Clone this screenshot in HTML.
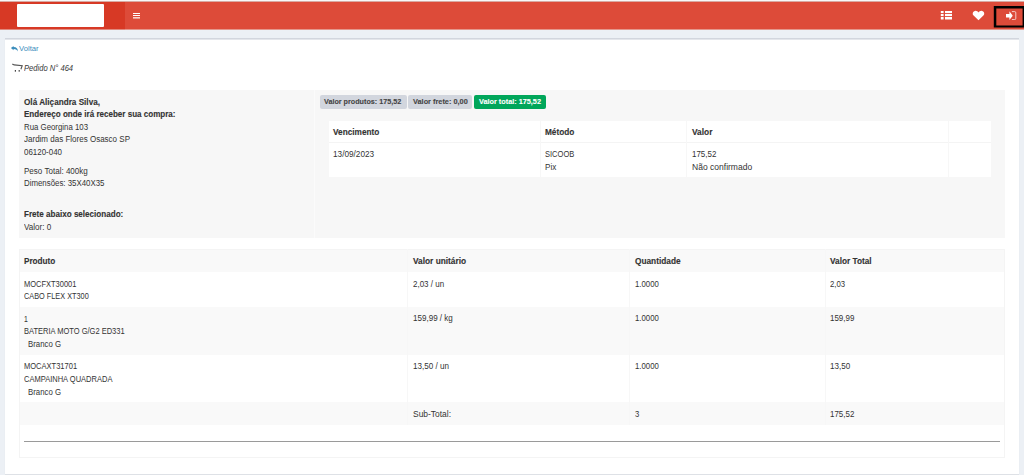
<!DOCTYPE html>
<html><head><meta charset="utf-8">
<style>
*{margin:0;padding:0;box-sizing:border-box}
html,body{width:1024px;height:475px;overflow:hidden;background:#ecf0f5;font-family:"Liberation Sans",sans-serif;color:#333;font-size:8px}
.a{position:absolute;white-space:nowrap}
#topstrip{position:absolute;left:0;top:0;width:1024px;height:2px;background:linear-gradient(#f8f8f8 0,#f8f8f8 1px,#d9aaa3 1px,#d9aaa3 2px)}
#logo{position:absolute;left:0;top:2px;width:125px;height:28px;background:linear-gradient(#d73925 0,#d73925 27px,#e0897e 27px)}
#nav{position:absolute;left:125px;top:2px;width:899px;height:28px;background:linear-gradient(#dd4b39 0,#dd4b39 27px,#e4978c 27px)}
#logobox{position:absolute;left:17px;top:4px;width:87px;height:23px;background:#fff;border-radius:1px}
#box{position:absolute;left:5px;top:38px;width:1014px;height:436px;background:linear-gradient(#d2d6de 0,#d2d6de 1px,#e4e6eb 1px,#e4e6eb 2px,#fff 2px);box-shadow:0 1px 1px rgba(0,0,0,.06)}
.t{position:absolute;white-space:nowrap;line-height:12px;transform-origin:0 50%}
#panel{position:absolute;left:19px;top:90px;width:986px;height:148px;background:#f7f7f7}
.badge{position:absolute;top:95px;height:14px;border-radius:2px;background:#d2d6de}
#ptab{position:absolute;left:329px;top:121px;width:662px;height:56px;background:#fff}
.hl{position:absolute;height:1px;background:#f4f4f4}
.vl{position:absolute;width:1px;background:#f7f7f7}
.row{position:absolute;left:19px;width:986px}
</style></head><body>
<div id="topstrip"></div>
<div id="logo"></div>
<div id="nav"></div>
<div id="logobox"></div>
<svg class="a" style="left:132px;top:12px" width="9" height="8" viewBox="132 12 9 8"><rect x="133" y="13" width="7" height="1" fill="#fff"/><rect x="133" y="15" width="7" height="1" fill="#fff"/><rect x="133" y="17" width="7" height="1.6" fill="#fff" opacity=".75"/></svg>
<svg class="a" style="left:940px;top:10px" width="13" height="11" viewBox="940 10 13 11"><g fill="#fff"><rect x="940.8" y="11" width="2.8" height="2.1"/><rect x="945" y="11" width="7" height="2.1"/><rect x="940.8" y="14" width="2.8" height="2.1"/><rect x="945" y="14" width="7" height="2.1"/><rect x="940.8" y="17" width="2.8" height="2.5"/><rect x="945" y="17" width="7" height="2.5"/></g></svg>
<svg class="a" style="left:972px;top:10px" width="13" height="11" viewBox="0 0 13 11"><path fill="#fff" d="M6.5 10.2 L1.6 5.6 C0.2 4.2 0.5 1.3 3 0.9 C4.6 0.7 5.8 1.6 6.5 2.6 C7.2 1.6 8.4 0.7 10 0.9 C12.5 1.3 12.8 4.2 11.4 5.6 Z"/></svg>
<svg class="a" style="left:990px;top:4px" width="34" height="26" viewBox="990 4 34 26"><path fill="#000" fill-rule="evenodd" d="M993.8 6.1 H1024 V27.6 H993.8 Z M996.3 8.6 H1022.6 V25.4 H996.3 Z"/></svg>
<svg class="a" style="left:1005px;top:11px" width="12" height="9" viewBox="0 0 12 9"><path fill="#fff" d="M1 3.1 Q1 2.9 1.2 2.9 H4.4 V0.6 Q4.4 0.4 4.6 0.5 L7.6 4.5 Q7.7 4.7 7.6 4.9 L4.6 8.8 Q4.4 9 4.4 8.7 V6.4 H1.2 Q1 6.4 1 6.2 Z"/><path fill="none" stroke="#fff" stroke-opacity=".8" stroke-width="0.9" d="M6.9 0.6 H9.6 Q10.8 0.6 10.8 1.8 V7.4 Q10.8 8.6 9.6 8.6 H6.9"/></svg>

<div id="box"></div>
<svg class="a" style="left:10px;top:45px" width="9" height="7" viewBox="0 0 9 7"><path fill="#3c8dbc" d="M0.9 3.1 L3.6 0.9 V1.9 C6.5 1.9 8 3.4 7.8 6.6 C7.2 4.8 6 3.9 3.6 3.9 V5.3 Z"/></svg>
<svg class="a" style="left:8px;top:58px" width="18" height="16" viewBox="8 58 18 16"><path fill="none" stroke="#555" stroke-width="1.1" d="M12.4 63.9 Q13 64.8 14.2 64.9 L22.2 65.8 L20.9 69.3"/><rect x="14.8" y="70.1" width="1.2" height="1.5" fill="#333"/><rect x="18.6" y="70.1" width="1.2" height="1.5" fill="#333"/></svg>

<div id="panel"></div>
<div class="vl" style="left:314px;top:90px;height:148px;background:#fbfbfb"></div>
<div class="badge" style="left:319.5px;width:87px"></div>
<div class="badge" style="left:408px;width:64px"></div>
<div class="badge" style="left:474px;width:72px;background:#00a65a"></div>

<div id="ptab"></div>
<div class="hl" style="left:329px;top:142px;width:662px"></div>
<div class="vl" style="left:540px;top:121px;height:56px"></div>
<div class="vl" style="left:686px;top:121px;height:56px"></div>
<div class="vl" style="left:948px;top:121px;height:56px"></div>

<div class="row" style="top:249px;height:23px;background:#f9f9f9"></div>
<div class="row" style="top:307px;height:48px;background:#f9f9f9"></div>
<div class="row" style="top:402px;height:23px;background:#f9f9f9"></div>
<div class="a" style="left:19px;top:249px;width:986px;height:209px;border:1px solid #f4f4f4"></div>
<div class="vl" style="left:407px;top:249px;height:176px"></div>
<div class="vl" style="left:629px;top:249px;height:176px"></div>
<div class="vl" style="left:825px;top:249px;height:176px"></div>
<div class="a" style="left:24px;top:441px;width:976px;height:1px;background:#9a9a9a"></div>
<div class="t" style="left:24.30px;top:96.18px;font-size:8.5px;font-weight:bold;font-style:normal;color:#333;transform:scaleX(0.9614);-webkit-text-stroke:0.12px #333">Olá Aliçandra Silva,</div>
<div class="t" style="left:24.30px;top:108.38px;font-size:8.5px;font-weight:bold;font-style:normal;color:#333;transform:scaleX(0.9460);-webkit-text-stroke:0.12px #333">Endereço onde irá receber sua compra:</div>
<div class="t" style="left:24.30px;top:120.88px;font-size:8.5px;font-weight:normal;font-style:normal;color:#333;transform:scaleX(0.9214)">Rua Georgina 103</div>
<div class="t" style="left:24.30px;top:133.48px;font-size:8.5px;font-weight:normal;font-style:normal;color:#333;transform:scaleX(0.9428)">Jardim das Flores Osasco SP</div>
<div class="t" style="left:24.30px;top:146.28px;font-size:8.5px;font-weight:normal;font-style:normal;color:#333;transform:scaleX(0.9349)">06120-040</div>
<div class="t" style="left:24.30px;top:164.58px;font-size:8.5px;font-weight:normal;font-style:normal;color:#333;transform:scaleX(0.9463)">Peso Total: 400kg</div>
<div class="t" style="left:24.30px;top:177.28px;font-size:8.5px;font-weight:normal;font-style:normal;color:#333;transform:scaleX(0.9247)">Dimensões: 35X40X35</div>
<div class="t" style="left:24.30px;top:208.28px;font-size:8.5px;font-weight:bold;font-style:normal;color:#333;transform:scaleX(0.9512);-webkit-text-stroke:0.12px #333">Frete abaixo selecionado:</div>
<div class="t" style="left:24.30px;top:220.68px;font-size:8.5px;font-weight:normal;font-style:normal;color:#333;transform:scaleX(0.9490)">Valor: 0</div>
<div class="t" style="left:333.20px;top:126.08px;font-size:8.5px;font-weight:bold;font-style:normal;color:#333;transform:scaleX(0.9704);-webkit-text-stroke:0.12px #333">Vencimento</div>
<div class="t" style="left:544.70px;top:126.08px;font-size:8.5px;font-weight:bold;font-style:normal;color:#333;transform:scaleX(0.9696);-webkit-text-stroke:0.12px #333">Método</div>
<div class="t" style="left:691.90px;top:126.08px;font-size:8.5px;font-weight:bold;font-style:normal;color:#333;transform:scaleX(0.9812);-webkit-text-stroke:0.12px #333">Valor</div>
<div class="t" style="left:333.20px;top:147.58px;font-size:8.5px;font-weight:normal;font-style:normal;color:#333;transform:scaleX(0.9661)">13/09/2023</div>
<div class="t" style="left:544.70px;top:147.58px;font-size:8.5px;font-weight:normal;font-style:normal;color:#333;transform:scaleX(0.8861)">SICOOB</div>
<div class="t" style="left:544.70px;top:161.08px;font-size:8.5px;font-weight:normal;font-style:normal;color:#333;transform:scaleX(0.9571)">Pix</div>
<div class="t" style="left:691.90px;top:147.58px;font-size:8.5px;font-weight:normal;font-style:normal;color:#333;transform:scaleX(0.9346)">175,52</div>
<div class="t" style="left:691.90px;top:161.08px;font-size:8.5px;font-weight:normal;font-style:normal;color:#333;transform:scaleX(1.0033)">Não confirmado</div>
<div class="t" style="left:24.40px;top:255.38px;font-size:8.5px;font-weight:bold;font-style:normal;color:#333;transform:scaleX(0.9607);-webkit-text-stroke:0.12px #333">Produto</div>
<div class="t" style="left:412.90px;top:255.38px;font-size:8.5px;font-weight:bold;font-style:normal;color:#333;transform:scaleX(0.9776);-webkit-text-stroke:0.12px #333">Valor unitário</div>
<div class="t" style="left:634.70px;top:255.38px;font-size:8.5px;font-weight:bold;font-style:normal;color:#333;transform:scaleX(0.9752);-webkit-text-stroke:0.12px #333">Quantidade</div>
<div class="t" style="left:830.20px;top:255.38px;font-size:8.5px;font-weight:bold;font-style:normal;color:#333;transform:scaleX(0.9714);-webkit-text-stroke:0.12px #333">Valor Total</div>
<div class="t" style="left:24.40px;top:277.78px;font-size:8.5px;font-weight:normal;font-style:normal;color:#333;transform:scaleX(0.8804)">MOCFXT30001</div>
<div class="t" style="left:24.40px;top:290.38px;font-size:8.5px;font-weight:normal;font-style:normal;color:#333;transform:scaleX(0.8614)">CABO FLEX XT300</div>
<div class="t" style="left:412.90px;top:277.78px;font-size:8.5px;font-weight:normal;font-style:normal;color:#333;transform:scaleX(0.9401)">2,03 / un</div>
<div class="t" style="left:634.70px;top:277.78px;font-size:8.5px;font-weight:normal;font-style:normal;color:#333;transform:scaleX(0.9153)">1.0000</div>
<div class="t" style="left:830.20px;top:277.78px;font-size:8.5px;font-weight:normal;font-style:normal;color:#333;transform:scaleX(0.9129)">2,03</div>
<div class="t" style="left:24.40px;top:312.78px;font-size:8.5px;font-weight:normal;font-style:normal;color:#333;transform:scaleX(0.8041)">1</div>
<div class="t" style="left:24.40px;top:324.88px;font-size:8.5px;font-weight:normal;font-style:normal;color:#333;transform:scaleX(0.8824)">BATERIA MOTO G/G2 ED331</div>
<div class="t" style="left:28.00px;top:338.08px;font-size:8.5px;font-weight:normal;font-style:normal;color:#333;transform:scaleX(0.9191)">Branco G</div>
<div class="t" style="left:412.90px;top:312.28px;font-size:8.5px;font-weight:normal;font-style:normal;color:#333;transform:scaleX(0.9463)">159,99 / kg</div>
<div class="t" style="left:634.70px;top:312.28px;font-size:8.5px;font-weight:normal;font-style:normal;color:#333;transform:scaleX(0.9153)">1.0000</div>
<div class="t" style="left:830.20px;top:312.28px;font-size:8.5px;font-weight:normal;font-style:normal;color:#333;transform:scaleX(0.9346)">159,99</div>
<div class="t" style="left:24.40px;top:359.58px;font-size:8.5px;font-weight:normal;font-style:normal;color:#333;transform:scaleX(0.8850)">MOCAXT31701</div>
<div class="t" style="left:24.40px;top:372.88px;font-size:8.5px;font-weight:normal;font-style:normal;color:#333;transform:scaleX(0.8843)">CAMPAINHA QUADRADA</div>
<div class="t" style="left:28.00px;top:385.68px;font-size:8.5px;font-weight:normal;font-style:normal;color:#333;transform:scaleX(0.9191)">Branco G</div>
<div class="t" style="left:412.90px;top:359.58px;font-size:8.5px;font-weight:normal;font-style:normal;color:#333;transform:scaleX(0.9522)">13,50 / un</div>
<div class="t" style="left:634.70px;top:359.58px;font-size:8.5px;font-weight:normal;font-style:normal;color:#333;transform:scaleX(0.9153)">1.0000</div>
<div class="t" style="left:830.20px;top:359.58px;font-size:8.5px;font-weight:normal;font-style:normal;color:#333;transform:scaleX(0.9498)">13,50</div>
<div class="t" style="left:412.90px;top:407.98px;font-size:8.5px;font-weight:normal;font-style:normal;color:#333;transform:scaleX(0.9930)">Sub-Total:</div>
<div class="t" style="left:634.70px;top:407.98px;font-size:8.5px;font-weight:normal;font-style:normal;color:#333;transform:scaleX(0.9000)">3</div>
<div class="t" style="left:830.20px;top:407.98px;font-size:8.5px;font-weight:normal;font-style:normal;color:#333;transform:scaleX(0.9346)">175,52</div>
<div class="t" style="left:19.40px;top:43.28px;font-size:8px;font-weight:normal;font-style:normal;color:#3c8dbc;transform:scaleX(0.9582)">Voltar</div>
<div class="t" style="left:23.60px;top:61.98px;font-size:8.5px;font-weight:normal;font-style:italic;color:#383838;transform:scaleX(0.8942)">Pedido N° 464</div>
<div class="t" style="left:324.40px;top:95.88px;font-size:8.1px;font-weight:bold;font-style:normal;color:#444;transform:scaleX(0.8897);-webkit-text-stroke:0.12px #444">Valor produtos: 175,52</div>
<div class="t" style="left:413.00px;top:95.88px;font-size:8.1px;font-weight:bold;font-style:normal;color:#444;transform:scaleX(0.9084);-webkit-text-stroke:0.12px #444">Valor frete: 0,00</div>
<div class="t" style="left:479.00px;top:95.88px;font-size:8.1px;font-weight:bold;font-style:normal;color:#fff;transform:scaleX(0.9001);-webkit-text-stroke:0.12px #fff">Valor total: 175,52</div>
</body></html>
